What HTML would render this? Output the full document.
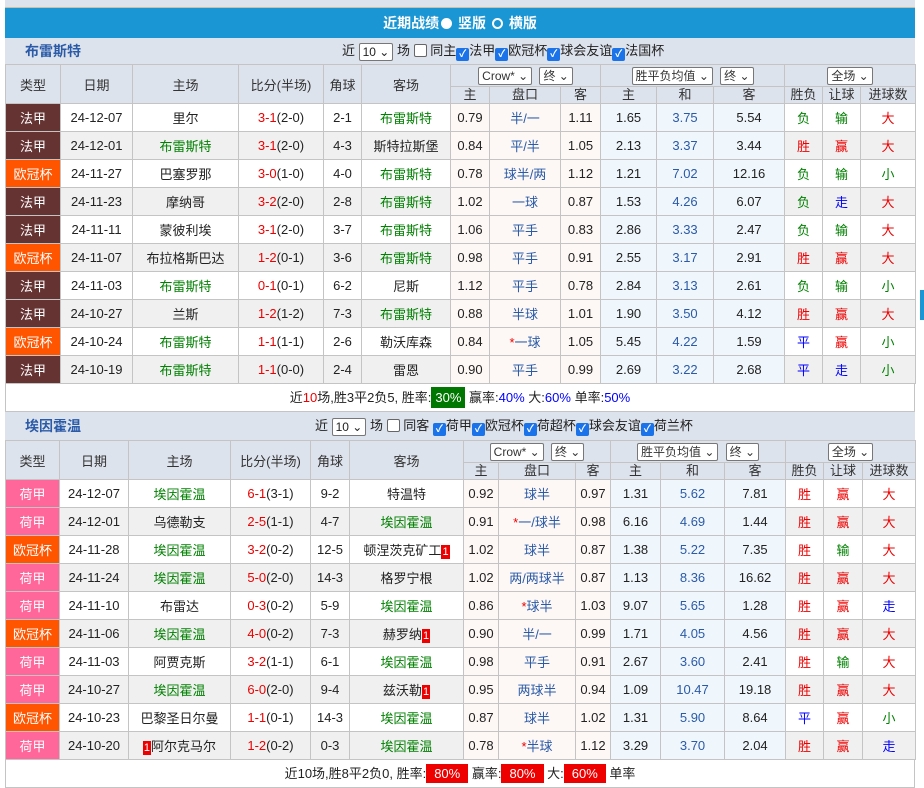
<!DOCTYPE html>
<html><head><meta charset="utf-8"><style>
*{box-sizing:border-box;margin:0;padding:0}
body{width:924px;height:769px;overflow:hidden;background:#fff;font-family:"Liberation Sans","Noto Sans CJK SC",sans-serif;font-size:13px;color:#222;position:relative}
.wrap{position:absolute;left:5px;top:0;width:910px}
.top{height:8px;background:#dde3ec;border-bottom:1px solid #c8c0a8}
.bar{height:30px;background:#1a96d4;color:#fff;font-weight:bold;font-size:14px;text-align:center;line-height:30px}
.bar i{display:inline-block;width:11px;height:11px;border-radius:50%;background:#fff;vertical-align:-1px;margin:0 2px}
.bar i.o{background:transparent;border:2px solid #fff}
.sec{height:26px;background:#dde3ec;position:relative;line-height:26px}
.sec .t{position:absolute;left:20px;color:#2a5aa8;font-weight:bold;font-size:14px}
.sec .f{position:absolute;top:0;font-size:13px;color:#222}
.sel{display:inline-block;border:1px solid #777;background:#fff;height:18px;line-height:16px;padding:0 3px;border-radius:2px;vertical-align:middle;font-size:12px}
.cb{display:inline-block;width:13px;height:13px;border-radius:2px;vertical-align:-2px;background:#1a73e8;color:#fff;font-size:10px;line-height:13px;text-align:center;font-weight:bold}
.cb.e{background:#fff;border:1px solid #666}
table{border-collapse:collapse;table-layout:fixed;width:910px}
td,th{border:1px solid #c4c4c4;text-align:center;font-weight:normal;height:28px;white-space:nowrap;overflow:hidden;padding:0}
th{background:#dde3ec;color:#333}
tr.h2 th{height:17px;line-height:16px}
tr.h1 th.s{height:22px;line-height:20px}
tr.g td{background:#f0f0f0}
tr td.a{background:#fdf8f5}tr td.b{background:#f0f7fc}
tr td.ty{color:#fff}
tr td.f1{background:#663333}tr td.oc{background:#ff5500}tr td.hj{background:#ff6699}
.r{color:#e00}.gn{color:#008000}.bl{color:#00f}.pk{color:#2a5aa8}
.n{display:inline-block;background:#e00;color:#fff;font-size:11px;line-height:14px;padding:0 1px}
.sum{height:28px;background:#fff;border:1px solid #c4c4c4;border-top:0;text-align:center;line-height:28px;font-size:13px}
.pct{background:#007700;color:#fff;padding:3px 4px}
</style></head><body><div class="wrap">
<div class="top"></div>
<div class="bar">近期战绩<i></i> 竖版 <i class="o"></i> 横版</div>
<div class="sec"><span class="t">布雷斯特</span><span class="f" style="left:337px">近 <span class="sel">10 ⌄</span> 场 <span class="cb e"></span> 同主<span class="cb">✓</span>法甲<span class="cb">✓</span>欧冠杯<span class="cb">✓</span>球会友谊<span class="cb">✓</span>法国杯</span></div>
<table>
<colgroup><col style="width:55px"><col style="width:72px"><col style="width:106px"><col style="width:85px"><col style="width:38px"><col style="width:89px"><col style="width:39px"><col style="width:71px"><col style="width:40px"><col style="width:56px"><col style="width:57px"><col style="width:71px"><col style="width:38px"><col style="width:38px"><col style="width:55px"></colgroup>
<tr class="h1"><th rowspan="2">类型</th><th rowspan="2">日期</th><th rowspan="2">主场</th><th rowspan="2">比分(半场)</th><th rowspan="2">角球</th><th rowspan="2">客场</th><th class="s" colspan="3"><span class="sel">Crow* ⌄</span> &nbsp;<span class="sel">终 ⌄</span></th><th class="s" colspan="3"><span class="sel">胜平负均值 ⌄</span> &nbsp;<span class="sel">终 ⌄</span></th><th class="s" colspan="3"><span class="sel">全场 ⌄</span></th></tr>
<tr class="h2"><th>主</th><th>盘口</th><th>客</th><th>主</th><th>和</th><th>客</th><th>胜负</th><th>让球</th><th>进球数</th></tr>
<tr><td class="ty f1">法甲</td><td>24-12-07</td><td>里尔</td><td><span class="r">3-1</span>(2-0)</td><td>2-1</td><td class="gn">布雷斯特</td><td class="a">0.79</td><td class="a pk">半/一</td><td class="a">1.11</td><td class="b">1.65</td><td class="b pk">3.75</td><td class="b">5.54</td><td class="gn">负</td><td class="gn">输</td><td class="r">大</td></tr>
<tr class="g"><td class="ty f1">法甲</td><td>24-12-01</td><td class="gn">布雷斯特</td><td><span class="r">3-1</span>(2-0)</td><td>4-3</td><td>斯特拉斯堡</td><td class="a">0.84</td><td class="a pk">平/半</td><td class="a">1.05</td><td class="b">2.13</td><td class="b pk">3.37</td><td class="b">3.44</td><td class="r">胜</td><td class="r">赢</td><td class="r">大</td></tr>
<tr><td class="ty oc">欧冠杯</td><td>24-11-27</td><td>巴塞罗那</td><td><span class="r">3-0</span>(1-0)</td><td>4-0</td><td class="gn">布雷斯特</td><td class="a">0.78</td><td class="a pk">球半/两</td><td class="a">1.12</td><td class="b">1.21</td><td class="b pk">7.02</td><td class="b">12.16</td><td class="gn">负</td><td class="gn">输</td><td class="gn">小</td></tr>
<tr class="g"><td class="ty f1">法甲</td><td>24-11-23</td><td>摩纳哥</td><td><span class="r">3-2</span>(2-0)</td><td>2-8</td><td class="gn">布雷斯特</td><td class="a">1.02</td><td class="a pk">一球</td><td class="a">0.87</td><td class="b">1.53</td><td class="b pk">4.26</td><td class="b">6.07</td><td class="gn">负</td><td class="bl">走</td><td class="r">大</td></tr>
<tr><td class="ty f1">法甲</td><td>24-11-11</td><td>蒙彼利埃</td><td><span class="r">3-1</span>(2-0)</td><td>3-7</td><td class="gn">布雷斯特</td><td class="a">1.06</td><td class="a pk">平手</td><td class="a">0.83</td><td class="b">2.86</td><td class="b pk">3.33</td><td class="b">2.47</td><td class="gn">负</td><td class="gn">输</td><td class="r">大</td></tr>
<tr class="g"><td class="ty oc">欧冠杯</td><td>24-11-07</td><td>布拉格斯巴达</td><td><span class="r">1-2</span>(0-1)</td><td>3-6</td><td class="gn">布雷斯特</td><td class="a">0.98</td><td class="a pk">平手</td><td class="a">0.91</td><td class="b">2.55</td><td class="b pk">3.17</td><td class="b">2.91</td><td class="r">胜</td><td class="r">赢</td><td class="r">大</td></tr>
<tr><td class="ty f1">法甲</td><td>24-11-03</td><td class="gn">布雷斯特</td><td><span class="r">0-1</span>(0-1)</td><td>6-2</td><td>尼斯</td><td class="a">1.12</td><td class="a pk">平手</td><td class="a">0.78</td><td class="b">2.84</td><td class="b pk">3.13</td><td class="b">2.61</td><td class="gn">负</td><td class="gn">输</td><td class="gn">小</td></tr>
<tr class="g"><td class="ty f1">法甲</td><td>24-10-27</td><td>兰斯</td><td><span class="r">1-2</span>(1-2)</td><td>7-3</td><td class="gn">布雷斯特</td><td class="a">0.88</td><td class="a pk">半球</td><td class="a">1.01</td><td class="b">1.90</td><td class="b pk">3.50</td><td class="b">4.12</td><td class="r">胜</td><td class="r">赢</td><td class="r">大</td></tr>
<tr><td class="ty oc">欧冠杯</td><td>24-10-24</td><td class="gn">布雷斯特</td><td><span class="r">1-1</span>(1-1)</td><td>2-6</td><td>勒沃库森</td><td class="a">0.84</td><td class="a pk"><span class="r">*</span>一球</td><td class="a">1.05</td><td class="b">5.45</td><td class="b pk">4.22</td><td class="b">1.59</td><td class="bl">平</td><td class="r">赢</td><td class="gn">小</td></tr>
<tr class="g"><td class="ty f1">法甲</td><td>24-10-19</td><td class="gn">布雷斯特</td><td><span class="r">1-1</span>(0-0)</td><td>2-4</td><td>雷恩</td><td class="a">0.90</td><td class="a pk">平手</td><td class="a">0.99</td><td class="b">2.69</td><td class="b pk">3.22</td><td class="b">2.68</td><td class="bl">平</td><td class="bl">走</td><td class="gn">小</td></tr>
</table>
<div class="sum">近<span class="r">10</span>场,胜3平2负5, 胜率:<span class="pct">30%</span> 赢率:<span class="bl">40%</span> 大:<span class="bl">60%</span> 单率:<span class="bl">50%</span></div>
<div class="sec" style="height:28px;line-height:28px"><span class="t">埃因霍温</span><span class="f" style="left:310px">近 <span class="sel">10 ⌄</span> 场 <span class="cb e"></span> 同客 <span class="cb">✓</span>荷甲<span class="cb">✓</span>欧冠杯<span class="cb">✓</span>荷超杯<span class="cb">✓</span>球会友谊<span class="cb">✓</span>荷兰杯</span></div>
<table>
<colgroup><col style="width:54px"><col style="width:69px"><col style="width:102px"><col style="width:80px"><col style="width:39px"><col style="width:114px"><col style="width:35px"><col style="width:77px"><col style="width:35px"><col style="width:50px"><col style="width:64px"><col style="width:61px"><col style="width:38px"><col style="width:39px"><col style="width:53px"></colgroup>
<tr class="h1"><th rowspan="2">类型</th><th rowspan="2">日期</th><th rowspan="2">主场</th><th rowspan="2">比分(半场)</th><th rowspan="2">角球</th><th rowspan="2">客场</th><th class="s" colspan="3"><span class="sel">Crow* ⌄</span> &nbsp;<span class="sel">终 ⌄</span></th><th class="s" colspan="3"><span class="sel">胜平负均值 ⌄</span> &nbsp;<span class="sel">终 ⌄</span></th><th class="s" colspan="3"><span class="sel">全场 ⌄</span></th></tr>
<tr class="h2"><th>主</th><th>盘口</th><th>客</th><th>主</th><th>和</th><th>客</th><th>胜负</th><th>让球</th><th>进球数</th></tr>
<tr><td class="ty hj">荷甲</td><td>24-12-07</td><td class="gn">埃因霍温</td><td><span class="r">6-1</span>(3-1)</td><td>9-2</td><td>特温特</td><td class="a">0.92</td><td class="a pk">球半</td><td class="a">0.97</td><td class="b">1.31</td><td class="b pk">5.62</td><td class="b">7.81</td><td class="r">胜</td><td class="r">赢</td><td class="r">大</td></tr>
<tr class="g"><td class="ty hj">荷甲</td><td>24-12-01</td><td>乌德勒支</td><td><span class="r">2-5</span>(1-1)</td><td>4-7</td><td class="gn">埃因霍温</td><td class="a">0.91</td><td class="a pk"><span class="r">*</span>一/球半</td><td class="a">0.98</td><td class="b">6.16</td><td class="b pk">4.69</td><td class="b">1.44</td><td class="r">胜</td><td class="r">赢</td><td class="r">大</td></tr>
<tr><td class="ty oc">欧冠杯</td><td>24-11-28</td><td class="gn">埃因霍温</td><td><span class="r">3-2</span>(0-2)</td><td>12-5</td><td>顿涅茨克矿工<span class="n">1</span></td><td class="a">1.02</td><td class="a pk">球半</td><td class="a">0.87</td><td class="b">1.38</td><td class="b pk">5.22</td><td class="b">7.35</td><td class="r">胜</td><td class="gn">输</td><td class="r">大</td></tr>
<tr class="g"><td class="ty hj">荷甲</td><td>24-11-24</td><td class="gn">埃因霍温</td><td><span class="r">5-0</span>(2-0)</td><td>14-3</td><td>格罗宁根</td><td class="a">1.02</td><td class="a pk">两/两球半</td><td class="a">0.87</td><td class="b">1.13</td><td class="b pk">8.36</td><td class="b">16.62</td><td class="r">胜</td><td class="r">赢</td><td class="r">大</td></tr>
<tr><td class="ty hj">荷甲</td><td>24-11-10</td><td>布雷达</td><td><span class="r">0-3</span>(0-2)</td><td>5-9</td><td class="gn">埃因霍温</td><td class="a">0.86</td><td class="a pk"><span class="r">*</span>球半</td><td class="a">1.03</td><td class="b">9.07</td><td class="b pk">5.65</td><td class="b">1.28</td><td class="r">胜</td><td class="r">赢</td><td class="bl">走</td></tr>
<tr class="g"><td class="ty oc">欧冠杯</td><td>24-11-06</td><td class="gn">埃因霍温</td><td><span class="r">4-0</span>(0-2)</td><td>7-3</td><td>赫罗纳<span class="n">1</span></td><td class="a">0.90</td><td class="a pk">半/一</td><td class="a">0.99</td><td class="b">1.71</td><td class="b pk">4.05</td><td class="b">4.56</td><td class="r">胜</td><td class="r">赢</td><td class="r">大</td></tr>
<tr><td class="ty hj">荷甲</td><td>24-11-03</td><td>阿贾克斯</td><td><span class="r">3-2</span>(1-1)</td><td>6-1</td><td class="gn">埃因霍温</td><td class="a">0.98</td><td class="a pk">平手</td><td class="a">0.91</td><td class="b">2.67</td><td class="b pk">3.60</td><td class="b">2.41</td><td class="r">胜</td><td class="gn">输</td><td class="r">大</td></tr>
<tr class="g"><td class="ty hj">荷甲</td><td>24-10-27</td><td class="gn">埃因霍温</td><td><span class="r">6-0</span>(2-0)</td><td>9-4</td><td>兹沃勒<span class="n">1</span></td><td class="a">0.95</td><td class="a pk">两球半</td><td class="a">0.94</td><td class="b">1.09</td><td class="b pk">10.47</td><td class="b">19.18</td><td class="r">胜</td><td class="r">赢</td><td class="r">大</td></tr>
<tr><td class="ty oc">欧冠杯</td><td>24-10-23</td><td>巴黎圣日尔曼</td><td><span class="r">1-1</span>(0-1)</td><td>14-3</td><td class="gn">埃因霍温</td><td class="a">0.87</td><td class="a pk">球半</td><td class="a">1.02</td><td class="b">1.31</td><td class="b pk">5.90</td><td class="b">8.64</td><td class="bl">平</td><td class="r">赢</td><td class="gn">小</td></tr>
<tr class="g"><td class="ty hj">荷甲</td><td>24-10-20</td><td><span class="n">1</span>阿尔克马尔</td><td><span class="r">1-2</span>(0-2)</td><td>0-3</td><td class="gn">埃因霍温</td><td class="a">0.78</td><td class="a pk"><span class="r">*</span>半球</td><td class="a">1.12</td><td class="b">3.29</td><td class="b pk">3.70</td><td class="b">2.04</td><td class="r">胜</td><td class="r">赢</td><td class="bl">走</td></tr>
</table>
<div class="sum" style="line-height:20px;padding-top:4px">近10场,胜8平2负0, 胜率:<span style="background:#e00;color:#fff;padding:2px 8px">80%</span> 赢率:<span style="background:#e00;color:#fff;padding:2px 8px">80%</span> 大:<span style="background:#e00;color:#fff;padding:2px 8px">60%</span> 单率</div>
</div>
<div style="position:absolute;right:0;top:290px;width:4px;height:30px;background:#1a96d4"></div>
</body></html>
